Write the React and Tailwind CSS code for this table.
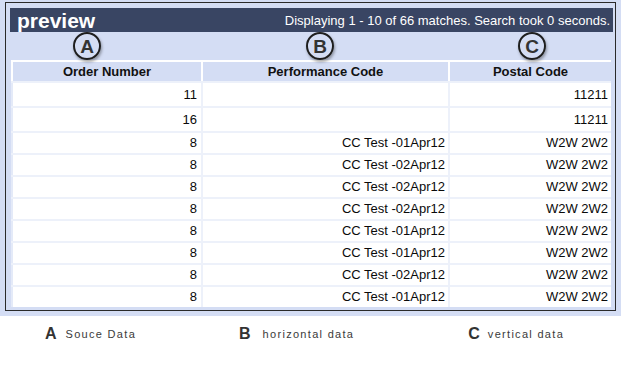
import React from "react";

const rows = [
  ["11", "", "11211", true],
  ["16", "", "11211", true],
  ["8", "CC Test -01Apr12", "W2W 2W2"],
  ["8", "CC Test -02Apr12", "W2W 2W2"],
  ["8", "CC Test -02Apr12", "W2W 2W2"],
  ["8", "CC Test -02Apr12", "W2W 2W2"],
  ["8", "CC Test -01Apr12", "W2W 2W2"],
  ["8", "CC Test -01Apr12", "W2W 2W2"],
  ["8", "CC Test -02Apr12", "W2W 2W2"],
  ["8", "CC Test -01Apr12", "W2W 2W2"],
];

function Circle({ letter, className }) {
  return (
    <div
      className={
        "w-[28px] h-[28px] rounded-full border-2 border-[#1e1e1e] flex items-center justify-center text-[19px] font-bold text-[#333] leading-none shadow-[1px_2px_3px_rgba(0,0,0,0.35)] " +
        className
      }
    >
      {letter}
    </div>
  );
}

export default function App() {
  return (
    <div className="w-[621px] h-[367px] bg-white font-['Liberation_Sans',Arial,sans-serif] overflow-hidden">
      <div className="bg-[#d4ddf4] pt-[2px] pl-[5px] pr-[5px] pb-[5px]">
        <div className="border border-[#2a2a2a] pl-[4px] pr-[2px] pt-[5px] pb-[3px]">
          <div className="h-[24px] bg-[#394563] flex items-center justify-between pl-[7px] pr-[3px]">
            <span className="text-white font-bold text-[21px] leading-none">preview</span>
            <span className="text-white text-[13px] leading-none">
              Displaying 1 - 10 of 66 matches. Search took 0 seconds.
            </span>
          </div>
          <div className="h-[28px] flex items-center pl-[63px]">
            <Circle letter="A" />
            <Circle letter="B" className="ml-[205px]" />
            <Circle letter="C" className="ml-[184px]" />
          </div>
          <div className="w-[600px] ml-[1px]">
            <div className="flex h-[21px] border-t-2 border-white text-[13px] font-bold text-[#111]">
              <div className="w-[190px] border-l-2 border-white flex items-center justify-center">Order Number</div>
              <div className="w-[247px] border-l-2 border-white flex items-center justify-center">Performance Code</div>
              <div className="w-[163px] border-l-2 border-white flex items-center justify-center">Postal Code</div>
            </div>
            {rows.map((r, i) => (
              <div
                key={i}
                className={
                  "flex bg-white border-t-2 border-[#edf1fa] text-[13px] text-[#0a0a0a] " +
                  (r[3] ? "h-[25px]" : "h-[22px]")
                }
              >
                <div className="w-[190px] border-l-2 border-[#e4eaf8] flex items-center justify-end pr-[4px]">{r[0]}</div>
                <div className="w-[247px] border-l-2 border-[#edf1fa] flex items-center justify-end pr-[3px]">{r[1]}</div>
                <div className="w-[163px] border-l-2 border-[#edf1fa] flex items-center justify-end pr-[3px]">{r[2]}</div>
              </div>
            ))}
          </div>
        </div>
      </div>
      <div className="flex items-center h-[36px] text-[#3a3a3a]">
        <span className="ml-[45px] text-[16px] font-bold text-[#333] leading-none">A</span>
        <span className="ml-[9px] text-[11px] tracking-[1.3px]">Souce Data</span>
        <span className="ml-[103px] text-[16px] font-bold text-[#333] leading-none">B</span>
        <span className="ml-[12px] text-[11px] tracking-[1.3px]">horizontal data</span>
        <span className="ml-[114px] text-[16px] font-bold text-[#333] leading-none">C</span>
        <span className="ml-[8px] text-[11px] tracking-[1.3px]">vertical data</span>
      </div>
    </div>
  );
}
